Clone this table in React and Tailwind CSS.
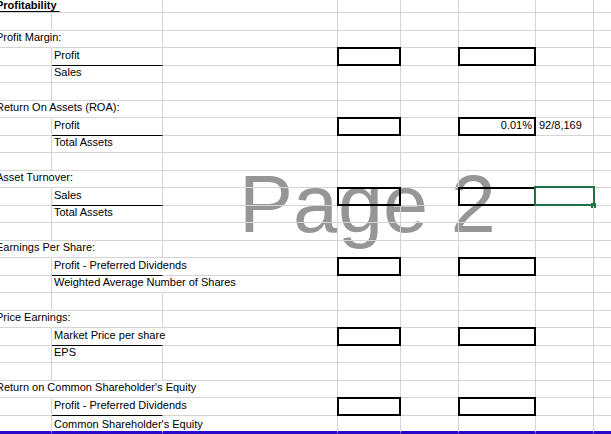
import React from "react";

// one entry per spreadsheet row, top to bottom
const rows = [
  { a: "Profitability\u00a0", bold: true, hideA: true },
  {},
  { a: "Profit Margin:", hideA: true },
  { b: "Profit", line: true, box: true },
  { b: "Sales" },
  {},
  { a: "Return On Assets (ROA):", hideA: true },
  { b: "Profit", line: true, box: true, f: "0.01%", g: "92/8,169" },
  { b: "Total Assets" },
  {},
  { a: "Asset Turnover:", hideA: true },
  { b: "Sales", line: true, box: true, sel: true },
  { b: "Total Assets" },
  {},
  { a: "Earnings Per Share:", hideA: true },
  { b: "Profit - Preferred Dividends", line: true, box: true, hideB: true },
  { b: "Weighted Average Number of Shares", hideB: true },
  {},
  { a: "Price Earnings:", hideA: true },
  { b: "Market Price per share", line: true, box: true, hideB: true },
  { b: "EPS" },
  {},
  { a: "Return on Common Shareholder's Equity", hideA: true, hideB: true },
  { b: "Profit - Preferred Dividends", line: true, box: true, hideB: true },
  { b: "Common Shareholder's Equity", hideB: true },
];

const txt = "whitespace-nowrap text-[11px] leading-[13px] text-black";

function Box() {
  return <div className="absolute -inset-px border-2 border-black" />;
}

function Row({ r, i }) {
  const last = i === rows.length - 1;
  const height =
    i === 0 ? "h-[13px]" : last ? "h-[18px]" : i % 2 === 1 ? "h-[18px]" : "h-[17px]";
  const pad = i === 0 ? "pb-0" : last ? "pb-0" : "pb-[3px]";
  const bottom = last ? "border-b-[3px] border-b-[#2a06c8]" : "border-b border-b-[#d4d4d4]";
  const cell = `h-full flex items-end ${pad} ${bottom}`;
  const grid = "border-r border-r-[#d4d4d4]";

  return (
    <div className={`flex ${height}`}>
      {/* A */}
      <div className={`w-[52px] shrink-0 ${cell} border-r ${r.hideA ? "border-r-transparent" : "border-r-[#d4d4d4]"}`}>
        {r.a && (
          <span className={`${txt} -ml-1 ${r.bold ? "font-bold underline underline-offset-[2px]" : ""}`}>
            {r.a}
          </span>
        )}
      </div>
      {/* B */}
      <div
        className={`w-[111px] shrink-0 h-full flex items-end ${pad} border-r ${
          r.hideB ? "border-r-transparent" : "border-r-[#d4d4d4]"
        } ${last ? bottom : r.line ? "border-b border-b-black" : "border-b border-b-[#d4d4d4]"} pl-[2px]`}
      >
        {r.b && <span className={txt}>{r.b}</span>}
      </div>
      {/* C */}
      <div className={`w-[175px] shrink-0 ${cell} ${grid}`} />
      {/* D */}
      <div className={`w-[63px] shrink-0 relative ${cell} ${grid}`}>{r.box && <Box />}</div>
      {/* E */}
      <div className={`w-[58px] shrink-0 ${cell} ${grid}`} />
      {/* F */}
      <div className={`w-[77px] shrink-0 relative justify-end pr-[3px] ${cell} ${grid}`}>
        {r.box && <Box />}
        {r.f && <span className={txt}>{r.f}</span>}
      </div>
      {/* G */}
      <div className={`w-[58px] shrink-0 relative pl-[3px] ${cell} ${grid}`}>
        {r.g && <span className={txt}>{r.g}</span>}
        {r.sel && (
          <>
            <div className="absolute -top-[2px] -left-[2px] -right-[2px] -bottom-px border-2 border-[#1f7244]" />
            <div className="absolute -right-[3px] -bottom-[3px] w-[5px] h-[5px] bg-[#1f7244]" />
          </>
        )}
      </div>
      {/* H */}
      <div className={`flex-1 ${cell}`} />
    </div>
  );
}

export default function App() {
  return (
    <div className="relative w-[611px] h-[434px] overflow-hidden bg-white font-['Liberation_Sans',Arial,sans-serif]">
      {/* page watermark sits under the grid */}
      <div className="absolute left-[239px] top-[164px] text-[81px] leading-[81px] text-[#969696] whitespace-nowrap">
        Page 2
      </div>

      <div className="relative z-10 flex flex-col">
        {rows.map((r, i) => (
          <Row key={i} r={r} i={i} />
        ))}
      </div>
    </div>
  );
}
